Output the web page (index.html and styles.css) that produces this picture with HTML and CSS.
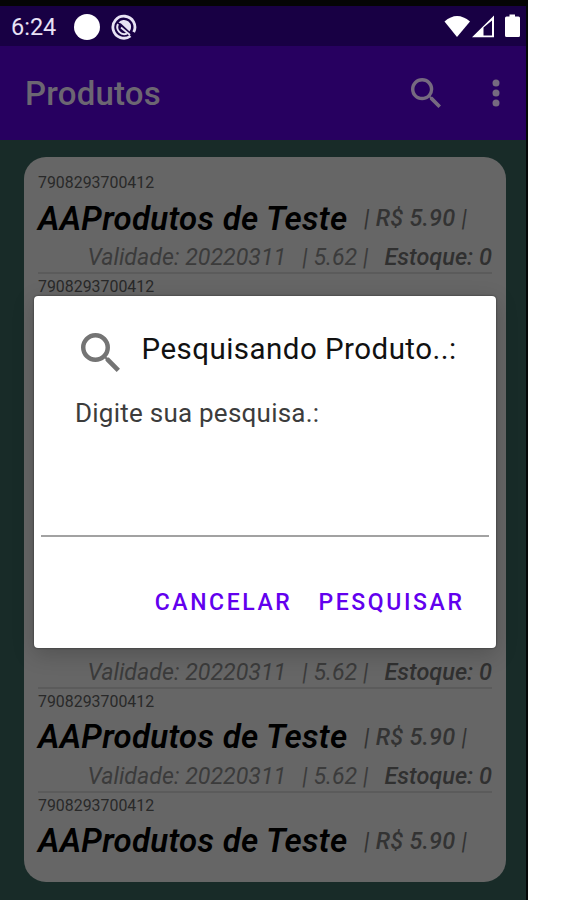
FILE: index.html
```html
<!DOCTYPE html>
<html lang="pt-br">
<head>
    <meta charset="UTF-8">
    <meta name="viewport" content="width=device-width, initial-scale=1.0">
    <title>Produtos</title>
    <link rel="stylesheet" href="styles.css">
</head>
<body>
    <div class="phone">
        <div class="status-bar">
            <span class="clock">6:24</span>
            <span class="dot"></span>
            <svg class="icon-dnd" width="26" height="26" viewBox="0 0 26 26">
                <path d="M19.5 22A11 11 0 1 1 22.7 18.2" fill="none" stroke="#e8e2f4" stroke-width="2.8"/>
                <path d="M7.5 8.5A7 7 0 1 1 18.5 17.5L10 9.5Z" fill="#e8e2f4"/>
                <path d="M7 10A7 7 0 0 0 16 19.5" fill="none" stroke="#e8e2f4" stroke-width="2"/>
                <path d="M10 13.5L19 21" stroke="#e8e2f4" stroke-width="1.8"/>
            </svg>
            <div class="status-icons">
                <svg width="78" height="26" viewBox="0 0 78 26">
                    <path d="M0.5 7.5Q13 -3.5 26 7.5L13 23Z" fill="#fff"/>
                    <path d="M28 23.2L50 1.5V23.2ZM39.5 13.5V21.5H48V6.5Z" fill="#fff" fill-rule="evenodd"/>
                    <path d="M65.5 0.5H71V2.5H74.5Q76 2.5 76 4V21.5Q76 23 74.5 23H62.5Q61 23 61 21.5V4Q61 2.5 62.5 2.5H65.5Z" fill="#fff"/>
                </svg>
            </div>
        </div>
        <header class="toolbar">
            <h1>Produtos</h1>
            <svg class="icon-search" width="30" height="30" viewBox="3 3 17.5 17.5">
                <path fill="#766a80" d="M15.5 14h-.79l-.28-.27A6.47 6.47 0 0 0 16 9.5 6.5 6.5 0 1 0 9.5 16c1.61 0 3.09-.59 4.23-1.57l.27.28v.79l5 4.99L20.49 19l-4.99-5zm-6 0C7.01 14 5 11.99 5 9.5S7.01 5 9.5 5 14 7.01 14 9.5 11.99 14 9.5 14z"/>
            </svg>
            <svg class="icon-more" width="8" height="28" viewBox="0 0 8 28">
                <circle cx="4" cy="4" r="3.5"/>
                <circle cx="4" cy="14" r="3.5"/>
                <circle cx="4" cy="24" r="3.5"/>
            </svg>
        </header>
        <main class="content">
            <div class="card">
                <div class="item">
                    <div class="code">7908293700412</div>
                    <div class="line"><span class="name">AAProdutos de Teste</span><span class="price"><i>|</i> R$ 5.90 <i>|</i></span></div>
                    <div class="info"><span class="date">Validade: 20220311</span><span class="cost">| 5.62 |</span><b>Estoque: 0</b></div>
                </div>
                <div class="item">
                    <div class="code">7908293700412</div>
                </div>
                <div class="item"></div>
                <div class="item"></div>
                <div class="item">
                    <div class="code"></div>
                    <div class="line"></div>
                    <div class="info"><span class="date">Validade: 20220311</span><span class="cost">| 5.62 |</span><b>Estoque: 0</b></div>
                </div>
                <div class="item">
                    <div class="code">7908293700412</div>
                    <div class="line"><span class="name">AAProdutos de Teste</span><span class="price"><i>|</i> R$ 5.90 <i>|</i></span></div>
                    <div class="info"><span class="date">Validade: 20220311</span><span class="cost">| 5.62 |</span><b>Estoque: 0</b></div>
                </div>
                <div class="item">
                    <div class="code">7908293700412</div>
                    <div class="line"><span class="name">AAProdutos de Teste</span><span class="price"><i>|</i> R$ 5.90 <i>|</i></span></div>
                </div>
            </div>
        </main>
        <div class="dialog">
            <div class="dialog-title">
                <svg width="39" height="39" viewBox="3 3 17.5 17.5">
                    <path fill="#747474" d="M15.5 14h-.79l-.28-.27A6.47 6.47 0 0 0 16 9.5 6.5 6.5 0 1 0 9.5 16c1.61 0 3.09-.59 4.23-1.57l.27.28v.79l5 4.99L20.49 19l-4.99-5zm-6 0C7.01 14 5 11.99 5 9.5S7.01 5 9.5 5 14 7.01 14 9.5 11.99 14 9.5 14z"/>
                </svg>
                <h2>Pesquisando Produto..:</h2>
            </div>
            <p>Digite sua pesquisa.:</p>
            <div class="field"></div>
            <div class="actions">
                <button class="cancel">CANCELAR</button>
                <button class="search">PESQUISAR</button>
            </div>
        </div>
    </div>
</body>
</html>
```
FILE: styles.css
```css
body {
    margin: 0;
    background-color: #fff;
    font-family: Roboto, sans-serif;
    overflow: hidden;
}
.phone {
    position: relative;
    display: flex;
    flex-direction: column;
    box-sizing: border-box;
    width: 528px;
    height: 900px;
    border-top: 6px solid #050505;
    border-right: 2px solid #050808;
    background-color: #182b28;
    overflow: hidden;
    white-space: nowrap;
}
.status-bar {
    display: flex;
    align-items: center;
    height: 40px;
    padding-left: 11px;
    background-color: #180044;
}
.clock {
    width: 63px;
    padding-top: 2px;
    font-size: 23.5px;
    color: #e8e2f4;
}
.dot {
    width: 26px;
    height: 26px;
    margin-top: 1px;
    border-radius: 50%;
    background-color: #fff;
}
.icon-dnd {
    margin: 1px 0 0 11px;
}
.status-icons {
    margin-left: auto;
    margin-right: 4px;
    height: 25px;
}
.toolbar {
    display: flex;
    align-items: center;
    height: 94px;
    padding: 0 26px 0 25px;
    background-color: #270060;
}
h1 {
    flex: 1;
    margin: 0;
    padding-top: 1px;
    font-size: 33px;
    font-weight: 500;
    letter-spacing: 0.2px;
    color: #6c6672;
}
.icon-more {
    margin-left: 51px;
    fill: #766a80;
}
.content {
    padding: 17px 20px 0 24px;
}
.card {
    box-sizing: border-box;
    height: 725px;
    padding: 13px 14px 0;
    border-radius: 22px;
    background-color: #666;
}
.item {
    box-sizing: border-box;
    height: 103.8px;
    border-bottom: 2px solid #5b5b5b;
}
.item:last-child {
    border: none;
}
.code {
    box-sizing: border-box;
    height: 24px;
    padding-top: 1px;
    line-height: 24px;
    font-size: 15.9px;
    color: #292929;
}
.line {
    display: flex;
    align-items: center;
    height: 48px;
}
.name {
    width: 326px;
    font-size: 33px;
    font-weight: 600;
    font-style: italic;
    letter-spacing: 0.3px;
    color: #000;
}
.price {
    font-size: 23.5px;
    font-weight: 500;
    font-style: italic;
    letter-spacing: 0.2px;
    color: #333;
}
.price i {
    font-weight: 400;
}
.info {
    display: flex;
    justify-content: flex-end;
    height: 30px;
    line-height: 30px;
    font-size: 23.2px;
    font-style: italic;
    color: #3b3b3b;
}
.cost {
    margin: 0 16px;
}
.info b {
    font-size: 23.5px;
    font-weight: 500;
    color: #303030;
}
.dialog {
    position: absolute;
    left: 34px;
    top: 290px;
    box-sizing: border-box;
    width: 462px;
    height: 352px;
    border-radius: 4px;
    background-color: #fff;
    box-shadow: 0 6px 22px rgba(0, 0, 0, 0.2), 0 0 2px rgba(0, 0, 0, 0.6);
}
.dialog-title {
    display: flex;
    padding: 37px 0 0 47px;
}
h2 {
    margin: 0 0 0 21.5px;
    line-height: 32px;
    font-size: 29.5px;
    font-weight: 400;
    letter-spacing: 0.47px;
    color: #111;
}
.dialog p {
    margin: 26px 0 0 41px;
    line-height: 30px;
    font-size: 26px;
    letter-spacing: 0.24px;
    color: #3c3c3c;
}
.field {
    height: 107px;
    margin: 0 7px;
    border-bottom: 2px solid #a2a2a2;
}
.actions {
    display: flex;
    justify-content: flex-end;
    gap: 26px;
    padding: 50px 31.5px 0 0;
}
button {
    height: 30px;
    padding: 0;
    border: none;
    background: none;
    font-family: Roboto, sans-serif;
    font-size: 23px;
    font-weight: 500;
    letter-spacing: 2.6px;
    color: #6200ee;
}
```
